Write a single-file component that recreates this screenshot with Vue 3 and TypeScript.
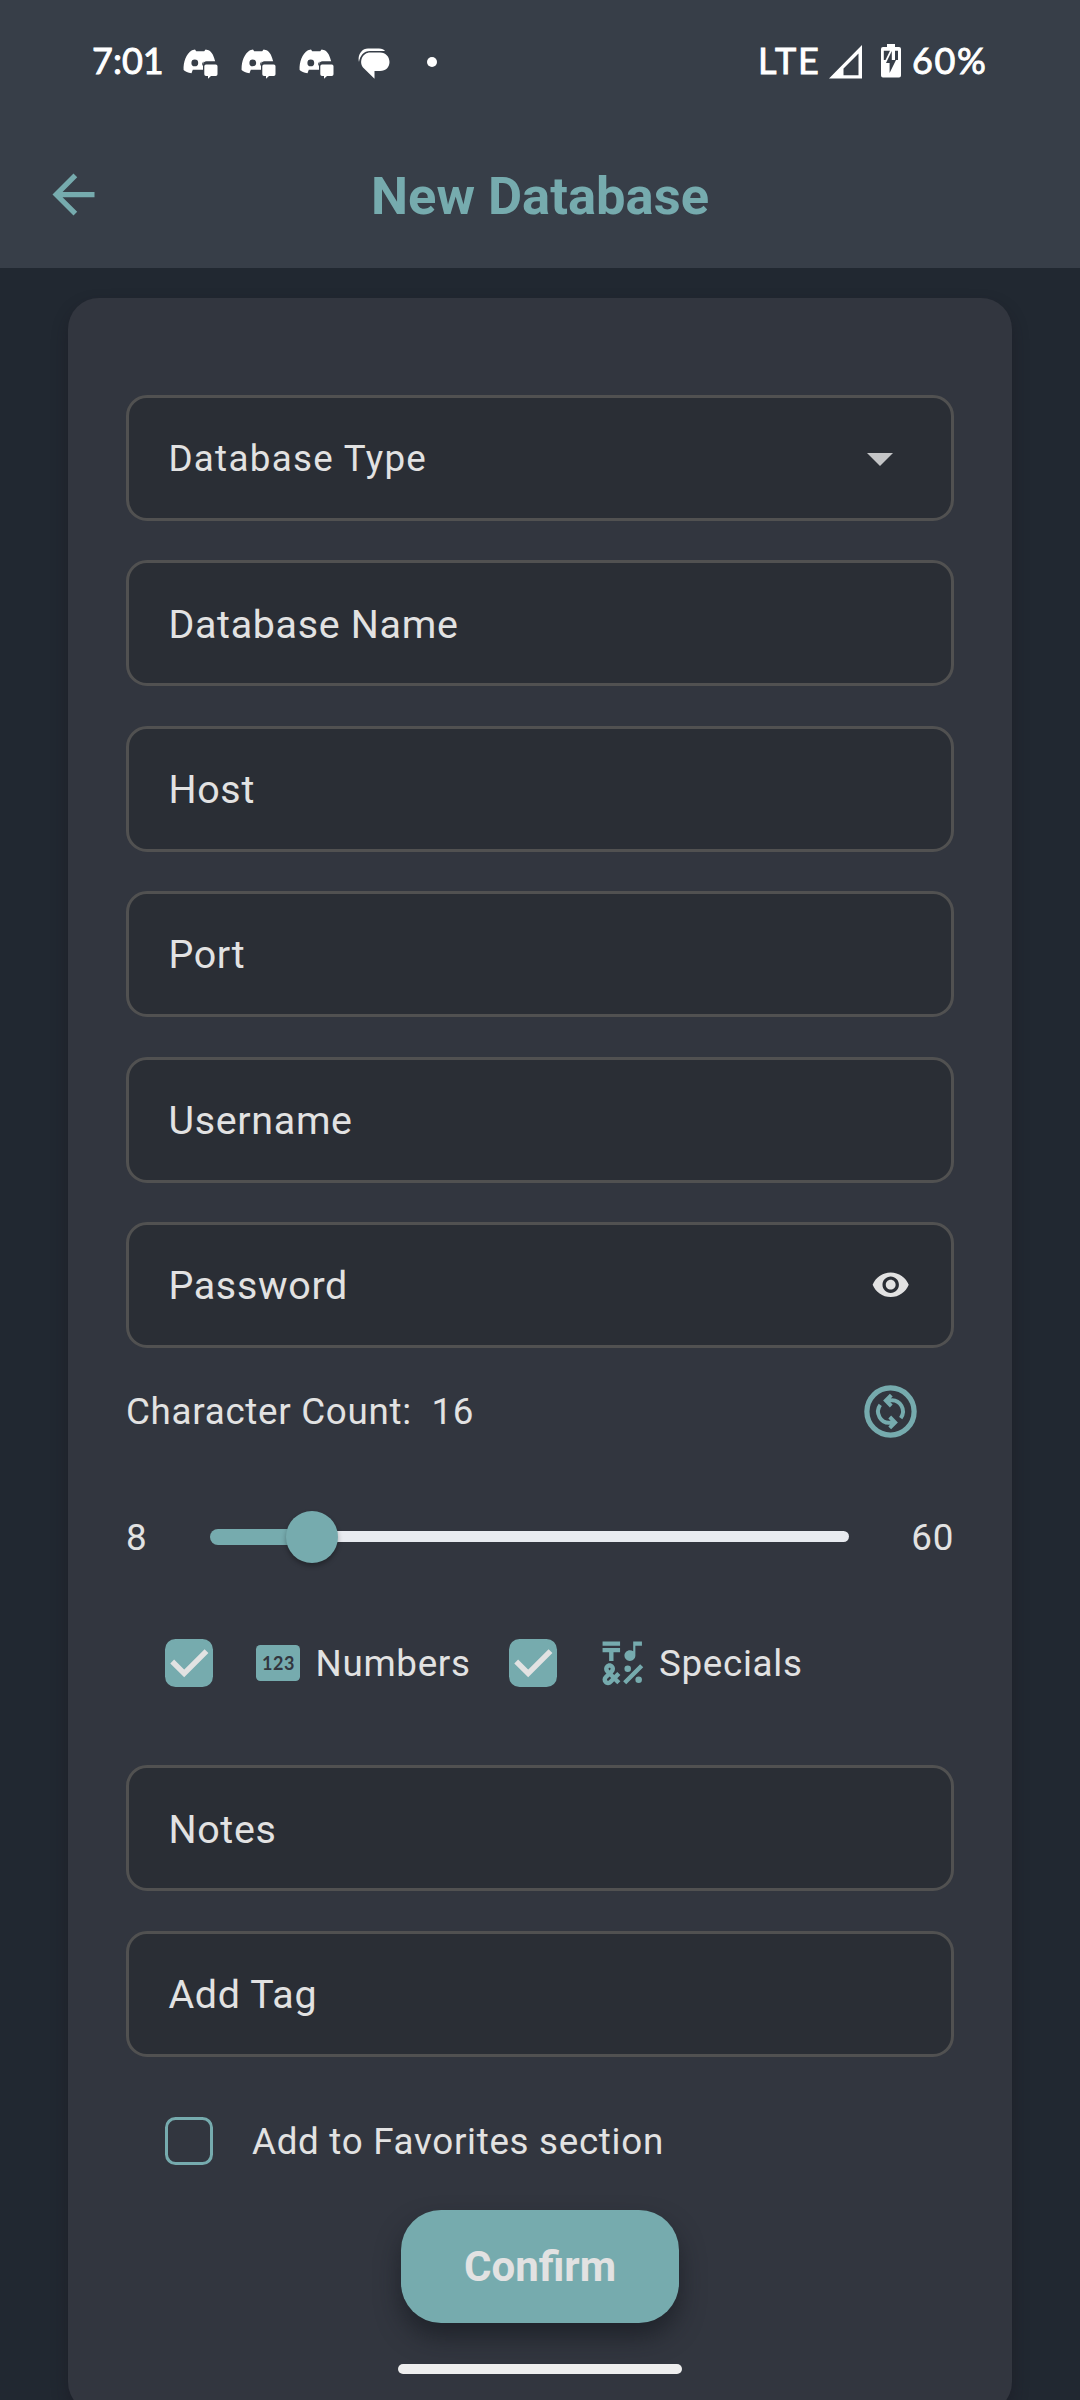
<script setup lang="ts">
import { ref, computed } from 'vue'

interface Field {
  id: string
  label: string
  kind?: 'select' | 'password'
}

const credentials: Field[] = [
  { id: 'type', label: 'Database Type', kind: 'select' },
  { id: 'name', label: 'Database Name' },
  { id: 'host', label: 'Host' },
  { id: 'port', label: 'Port' },
  { id: 'user', label: 'Username' },
  { id: 'pass', label: 'Password', kind: 'password' },
]
const extras: Field[] = [
  { id: 'notes', label: 'Notes' },
  { id: 'tag', label: 'Add Tag' },
]

const min = 8
const max = 60
const count = ref(16)
const numbers = ref(true)
const specials = ref(true)
const favorite = ref(false)

// The rounded ends extend the track past the thumb's travel.
const thumbX = computed(() => 8 + ((count.value - min) / (max - min)) * 612)
</script>

<template>
  <div class="screen">
    <header class="top">
      <div class="status">
        <span class="time">7:01</span>
        <svg v-for="n in 3" :key="n" class="discord" width="35" height="30" viewBox="0 0 35 30">
          <path fill="#fff" fill-rule="evenodd" d="M9 1.2 12 .5l1.2 1.7h8L22.600 .5l3 .7C29.500 3 31 8 32.200 12.300H23.500c-2 0-3.500 1.500-3.500 3.500v5H9.800l-1.300 3.500C5 24 2 22.500.6 21 .3 13 3 5 9 1.200ZM11.800 10.500a3.400 3.400 0 1 0 0 6.800 3.400 3.400 0 0 0 0-6.800ZM21 12.500a3 3 0 0 0-1.500 4.500l.5-3Z" />
          <path fill="#fff" d="M23 15.500h9.800q1.700 0 1.700 1.700v8.100q0 1.700-1.700 1.700H28l-3 2.800V27h-2q-1.700 0-1.700-1.700v-8.100q0-1.700 1.700-1.700Z" />
        </svg>
        <svg class="message" width="33" height="31" viewBox="0 0 33 31">
          <path fill="#fff" d="M1 14C-.8 7.500 3.500.5 10 .5h11c3 0 5 1 6 2.500H12C6 3 2 7.500 1 14Z" />
          <path fill="#fff" d="M12 4.500h10C28 4.500 31.500 9 31.500 14S28 23 22 23h-5.500v7.700L5 19.500C.5 13 5 4.500 12 4.500Z" />
        </svg>
        <i class="dot"></i>
        <span class="lte">LTE</span>
        <svg class="signal" width="33" height="34" viewBox="0 0 33 34">
          <path fill="#fff" fill-rule="evenodd" d="M33 0v33.500H0ZM29.500 8.500 14.500 23.500v6.800h15Z" />
        </svg>
        <svg class="battery" width="20" height="34" viewBox="0 0 20 34">
          <path fill="#fff" d="M6 0h8v3h4a2 2 0 0 1 2 2v26.500a2 2 0 0 1-2 2H2a2 2 0 0 1-2-2V5a2 2 0 0 1 2-2h4Z" />
          <path fill="#373e48" d="M2.800 6.800H9L4.500 16H2.800ZM14 6.800h3V16h-3ZM10.800 7v9H15L8.600 29V19H5Z" />
        </svg>
        <span class="pct">60%</span>
      </div>
      <div class="bar">
        <svg class="back" width="63" height="63" viewBox="0 0 24 24">
          <path fill="#76abae" d="M20 11H7.830l5.590-5.590L12 4l-8 8 8 8 1.410-1.410L7.830 13H20v-2z" />
        </svg>
        <h1>New Database</h1>
      </div>
    </header>

    <main class="card">
      <div class="fields">
        <div v-for="f in credentials" :key="f.id" class="field" :class="f.kind">
          <span>{{ f.label }}</span>
          <svg v-if="f.kind === 'select'" class="caret" width="26" height="13" viewBox="0 0 26 13">
            <path fill="#c4c5c7" d="M0 0h26L13 13z" />
          </svg>
          <svg v-if="f.kind === 'password'" class="eye" width="39.400" height="39.400" viewBox="0 0 24 24">
            <path fill="#e2e2e2" d="M12 4.500C7 4.500 2.730 7.610 1 12c1.730 4.390 6 7.500 11 7.500s9.270-3.110 11-7.500c-1.730-4.390-6-7.500-11-7.500zM12 17c-2.760 0-5-2.240-5-5s2.240-5 5-5 5 2.240 5 5-2.240 5-5 5zm0-8c-1.660 0-3 1.340-3 3s1.340 3 3 3 3-1.340 3-3-1.340-3-3-3z" />
          </svg>
        </div>
      </div>

      <div class="row count">
        <span>Character Count:&nbsp; {{ count }}</span>
        <svg width="63" height="63" viewBox="-12 -12 24 24" fill="none" stroke="#76abae">
          <circle r="9" stroke-width="2" />
          <g stroke-width="1.500">
            <path d="M-1.500-4.250H0A4.250 4.250 0 0 1 3.900 2.500M.3-6.200-1.750-4.150.3-2.100" />
            <path transform="rotate(180)" d="M-1.500-4.250H0A4.250 4.250 0 0 1 3.900 2.500M.3-6.200-1.750-4.150.3-2.100" />
          </g>
        </svg>
      </div>

      <div class="row range">
        <span>{{ min }}</span>
        <div class="track">
          <div class="active" :style="{ width: thumbX + 'px' }"></div>
          <div class="rest"></div>
          <i class="thumb" :style="{ left: thumbX + 'px' }"></i>
        </div>
        <span class="max">{{ max }}</span>
      </div>

      <div class="row options">
        <span class="check" :class="{ on: numbers }">
          <svg v-if="numbers" width="48" height="48" viewBox="0 0 48 48"><path d="m7.200 22.500 12 12L41.500 12.200" fill="none" stroke="#e2e2e2" stroke-width="5.400" /></svg>
        </span>
        <span class="pin">123</span>
        <span class="opt first">Numbers</span>
        <span class="check" :class="{ on: specials }">
          <svg v-if="specials" width="48" height="48" viewBox="0 0 48 48"><path d="m7.200 22.500 12 12L41.500 12.200" fill="none" stroke="#e2e2e2" stroke-width="5.400" /></svg>
        </span>
        <svg class="symbols" width="52.500" height="52.500" viewBox="0 0 24 24" fill="#76abae">
          <path d="M3 2h8v2H3zM6 11h2V7h3V5H3v2h3zM12.404 20.182l7.778-7.778 1.414 1.414-7.778 7.778z" />
          <circle cx="14.500" cy="14.500" r="1.500" />
          <circle cx="19.500" cy="19.500" r="1.500" />
          <path d="M15.500 11c1.380 0 2.500-1.120 2.500-2.500V4h3V2h-4v4.510C16.580 6.190 16.070 6 15.500 6 14.120 6 13 7.120 13 8.500s1.120 2.500 2.500 2.500z" />
          <path fill-rule="evenodd" d="m9.740 15.960-1.410 1.410-.71-.71.35-.35c.98-.98.98-2.560 0-3.540-.49-.49-1.130-.73-1.770-.73s-1.280.24-1.770.73c-.98.98-.98 2.560 0 3.540l.35.350-1.060 1.060c-.98.98-.98 2.560 0 3.540.49.500 1.130.740 1.770.740s1.280-.24 1.770-.73l1.060-1.060 1.410 1.410 1.410-1.410-1.410-1.410 1.410-1.410zM5.850 14.200c.12-.12.26-.15.35-.15s.23.030.35.150c.19.200.19.510 0 .710l-.35.350-.35-.36c-.19-.19-.19-.51 0-.7zm0 5.650c-.12.120-.26.150-.35.150s-.23-.03-.35-.15c-.19-.19-.19-.51 0-.71l1.060-1.060.71.710z" />
        </svg>
        <span class="opt">Specials</span>
      </div>

      <div class="fields more">
        <div v-for="f in extras" :key="f.id" class="field"><span>{{ f.label }}</span></div>
      </div>

      <div class="row favorite">
        <span class="check" :class="{ on: favorite }"></span>
        <span class="fav">Add to Favorites section</span>
      </div>

      <button class="confirm" type="button">Confirm</button>
    </main>
    <i class="home"></i>
  </div>
</template>

<style>
body {
  background: #212831;
}
</style>

<style scoped>
.screen {
  position: relative;
  box-sizing: border-box;
  width: 1080px;
  height: 2400px;
  overflow: hidden;
  background: #212831;
  color: #e2e2e2;
  font-family: Roboto, "Liberation Sans", sans-serif;
  font-size: 36.75px;
  letter-spacing: 0.7px;
}
svg {
  display: block;
  flex: none;
}
span {
  white-space: nowrap;
}
.top {
  height: 268px;
  background: #373e48;
}
.status {
  display: flex;
  align-items: flex-start;
  height: 122px;
  box-sizing: border-box;
  padding: 43px 0 0 92px;
  color: #fff;
  font: 400 36px/35px Lato, sans-serif;
  letter-spacing: 0;
}
.status span {
  -webkit-text-stroke: 0.9px #fff;
}
.time {
  width: 91px;
}
.discord {
  margin: 6px 23px 0 0;
}
.message {
  margin: 5px 0 0 1px;
}
.dot {
  width: 10px;
  height: 10px;
  margin: 14px 0 0 36px;
  border-radius: 50%;
  background: #fff;
}
.lte {
  width: 71px;
  margin-left: 321px;
  letter-spacing: 1.8px;
}
.signal {
  margin-top: 2px;
}
.battery {
  margin: 1px 11px 0 19px;
}
.pct {
  letter-spacing: 1.6px;
}
.bar {
  box-sizing: border-box;
  display: flex;
  align-items: center;
  height: 146px;
  padding: 0 42px;
}
.back {
  margin-bottom: 1px;
}
h1 {
  flex: 1;
  margin: 2px 63px 0 0;
  text-align: center;
  color: #76abae;
  font-size: 52.5px;
  font-weight: 700;
  letter-spacing: 0;
}
.card {
  box-sizing: border-box;
  width: 944px;
  height: 2115px;
  margin: 30px auto 0;
  padding: 97px 58px 0;
  border-radius: 31px;
  background: #32363f;
  box-shadow: 0 8px 16px rgba(26, 20, 30, 0.4);
}
.fields {
  display: flex;
  flex-direction: column;
  gap: 39.4px;
}
.field {
  box-sizing: border-box;
  display: flex;
  align-items: center;
  justify-content: space-between;
  height: 126px;
  padding: 0 39.4px;
  border: 3px solid #515151;
  border-radius: 21px;
  background: #2a2e35;
  font-size: 39.4px;
}
.field > span,
.row > span:not(.check):not(.pin) {
  padding-top: 1.5px;
}
.select {
  padding-right: 58px;
  font-size: 36.75px;
  letter-spacing: 1.31px;
}
.caret {
  margin-top: 2px;
}
.eye {
  margin-right: 1.5px;
}
.row {
  display: flex;
  align-items: center;
  height: 126px;
}
.count {
  justify-content: space-between;
  padding-right: 32px;
}
.count svg {
  margin-top: 1px;
}
.range {
  justify-content: space-between;
}
.range > span {
  width: 84px;
}
.range .max {
  text-align: right;
}
.track {
  position: relative;
  display: flex;
  align-items: center;
  width: 638.5px;
  margin-right: 21.5px;
}
.active {
  height: 16px;
  border-radius: 8px 0 0 8px;
  background: #76abae;
}
.rest {
  flex: 1;
  height: 11px;
  border-radius: 0 6px 6px 0;
  background: #e8ebf0;
}
.thumb {
  position: absolute;
  top: 50%;
  width: 52.5px;
  height: 52.5px;
  margin: -26.25px 0 0 -26.25px;
  border-radius: 50%;
  background: #76abae;
  box-shadow: 0 3px 5px rgba(0, 0, 0, 0.3);
}
.options,
.favorite {
  padding-left: 39px;
}
.check {
  box-sizing: border-box;
  width: 48px;
  height: 48px;
  border: 3px solid #76abae;
  border-radius: 10.5px;
}
.check.on {
  border: 0;
  background: #76abae;
}
.pin {
  box-sizing: border-box;
  width: 44px;
  height: 36px;
  margin: 0 15.5px 0 43px;
  padding-left: 1px;
  border-radius: 4.4px;
  background: #76abae;
  color: #32363f;
  font: 700 18px/36px Lato, sans-serif;
  letter-spacing: 0.6px;
  text-align: center;
}
.opt.first {
  width: 193.5px;
}
.symbols {
  margin: 0 11px 0 38.5px;
}
.more {
  margin-top: 39.4px;
}
.favorite {
  margin-top: 21px;
}
.fav {
  margin-left: 39px;
}
.confirm {
  display: block;
  width: 278px;
  height: 113px;
  margin: 6px auto 0;
  padding: 0;
  border: 0;
  border-radius: 40px;
  background: #76abae;
  color: #e2e2e2;
  font: 700 42px/113px Roboto, sans-serif;
  letter-spacing: 0;
  box-shadow: 0 14px 24px rgba(20, 24, 30, 0.6);
}
.home {
  position: absolute;
  left: 398px;
  top: 2364px;
  width: 284px;
  height: 10px;
  border-radius: 5px;
  background: #eeeeee;
}
</style>
